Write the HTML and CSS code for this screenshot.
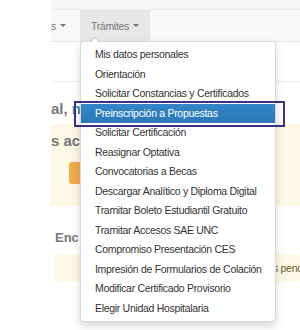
FILE: index.html
```html
<!DOCTYPE html>
<html lang="es">
<head>
    <meta charset="UTF-8">
    <title>Trámites</title>
    <link rel="stylesheet" href="styles.css">
</head>
<body>
    <div class="site">
        <div class="topbar"></div>
        <nav class="navbar">
            <ul class="nav">
                <li class="nav-item first">s <span class="caret"></span></li>
                <li class="nav-item open">
                    Trámites <span class="caret"></span>
                    <ul class="dropdown">
                        <li>Mis datos personales</li>
                        <li>Orientación</li>
                        <li>Solicitar Constancias y Certificados</li>
                        <li class="active">Preinscripción a Propuestas<span class="focus-ring"></span></li>
                        <li>Solicitar Certificación</li>
                        <li>Reasignar Optativa</li>
                        <li>Convocatorias a Becas</li>
                        <li>Descargar Analítico y Diploma Digital</li>
                        <li>Tramitar Boleto Estudiantil Gratuito</li>
                        <li>Tramitar Accesos SAE UNC</li>
                        <li>Compromiso Presentación CES</li>
                        <li>Impresión de Formularios de Colación</li>
                        <li>Modificar Certificado Provisorio</li>
                        <li>Elegir Unidad Hospitalaria</li>
                    </ul>
                </li>
            </ul>
        </nav>

        <div class="page-header"></div>

        <h2 class="welcome">al, <span class="name">n</span></h2>

        <div class="alert-box">
            <h3 class="alert-title">s ac</h3>
            <span class="btn-warning"></span>
        </div>

        <div class="section">
            <h3 class="section-title">Enc</h3>
            <div class="alert-small">s pend</div>
        </div>
    </div>
</body>
</html>
```

FILE: styles.css
```css
* {
    margin: 0;
    padding: 0;
    box-sizing: border-box;
}

body {
    font-family: "Liberation Sans", Arial, sans-serif;
    background: #ffffff;
    width: 300px;
    height: 330px;
    overflow: hidden;
}

.site {
    margin-left: 51px;
    height: 330px;
    overflow: hidden;
    position: relative;
}

.topbar {
    height: 10px;
    background: #f6f6f6;
    border-bottom: 1px solid #ececec;
}

.navbar {
    height: 32px;
    background: #f8f8f8;
    border-bottom: 1px solid #e7e7e7;
}

.nav {
    list-style: none;
    display: flex;
    height: 31px;
}

.nav-item {
    position: relative;
    display: flex;
    align-items: center;
    gap: 4px;
    padding: 0 11px;
    font-size: 10.5px;
    letter-spacing: -0.3px;
    color: #777777;
}

.nav-item.first {
    padding: 0 14px 0 0;
}

.nav-item.open {
    background: #e7e7e7;
}

.caret {
    display: inline-block;
    width: 0;
    height: 0;
    border-top: 3px solid #777777;
    border-left: 3px solid transparent;
    border-right: 3px solid transparent;
}

.dropdown {
    position: absolute;
    top: 31px;
    left: 0;
    width: 196px;
    list-style: none;
    background: #ffffff;
    border: 1px solid rgba(0, 0, 0, 0.15);
    border-radius: 4px;
    box-shadow: 0 4px 10px rgba(0, 0, 0, 0.16);
    padding: 3px 0 3px;
    z-index: 10;
}

.dropdown::before {
    content: "";
    position: absolute;
    top: -5px;
    left: 9px;
    border-bottom: 5px solid rgba(0, 0, 0, 0.15);
    border-left: 5px solid transparent;
    border-right: 5px solid transparent;
}

.dropdown::after {
    content: "";
    position: absolute;
    top: -4px;
    left: 10px;
    border-bottom: 4px solid #ffffff;
    border-left: 4px solid transparent;
    border-right: 4px solid transparent;
}

.dropdown li {
    position: relative;
    height: 19.5px;
    line-height: 19.5px;
    padding-left: 14px;
    font-size: 10.5px;
    letter-spacing: -0.3px;
    color: #333333;
    white-space: nowrap;
}

.dropdown li.active {
    color: #ffffff;
    background: linear-gradient(#3386c8, #2a78b8);
}

.focus-ring {
    position: absolute;
    top: -3px;
    bottom: -4px;
    left: -7px;
    right: -10px;
    border: 2px solid #3d2f86;
}

.page-header {
    height: 40px;
    border-bottom: 1px solid #eeeeee;
}

.welcome {
    margin-top: 18px;
    font-size: 15px;
    line-height: 18px;
    font-weight: bold;
    color: #777777;
    white-space: nowrap;
}

.welcome .name {
    color: #3f8fa5;
}

.alert-box {
    margin-top: 6px;
    height: 82px;
    background: #fcf8e3;
    padding: 8px 0 0;
}

.alert-title {
    font-size: 15px;
    line-height: 18px;
    font-weight: bold;
    color: #777777;
    white-space: nowrap;
}

.btn-warning {
    display: block;
    margin: 12px 0 0 18px;
    width: 60px;
    height: 22px;
    background: #f0ad4e;
    border-radius: 3px;
}

.section {
    padding-left: 4px;
}

.section-title {
    margin-top: 24px;
    font-size: 13px;
    line-height: 16px;
    font-weight: bold;
    color: #777777;
    white-space: nowrap;
}

.alert-small {
    margin-top: 8px;
    height: 28px;
    line-height: 28px;
    background: #fcf8e3;
    border-radius: 4px;
    padding-left: 218px;
    font-size: 10.5px;
    letter-spacing: -0.3px;
    color: #6d5a3a;
    white-space: nowrap;
}
```
